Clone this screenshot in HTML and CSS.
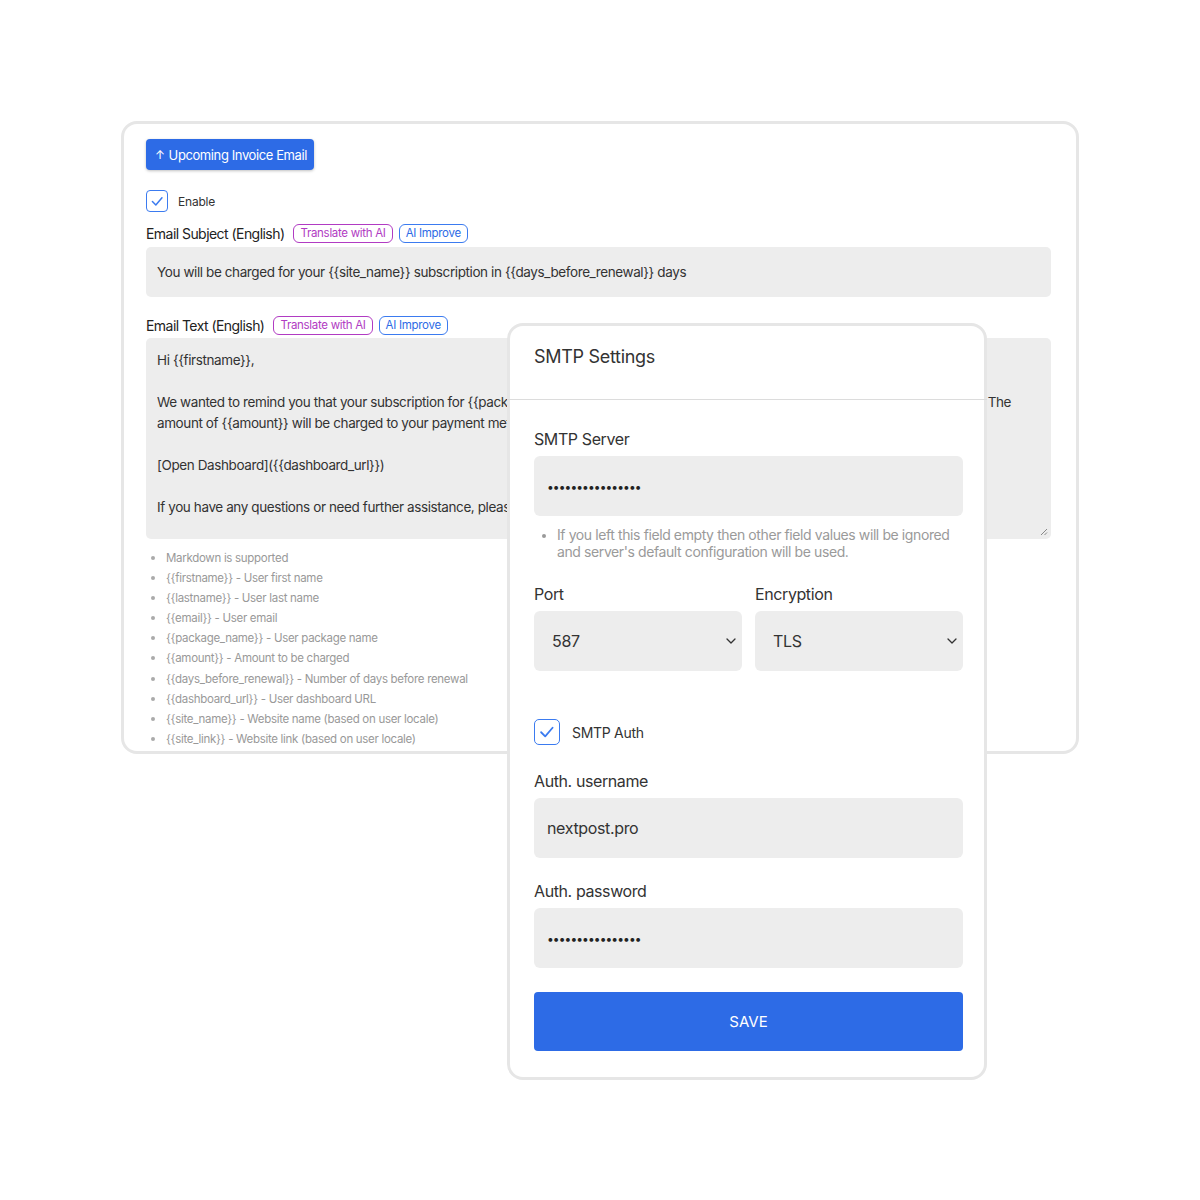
FILE: index.html
```html
<!DOCTYPE html>
<html lang="en">
<head>
<meta charset="utf-8">
<title>Upcoming Invoice Email</title>
<link rel="stylesheet" href="styles.css">
</head>
<body>
<div class="stage">
  <section class="card">
    <button class="tab-btn"><span class="arrow">↑</span> Upcoming Invoice Email</button>

    <label class="check-row">
      <span class="checkbox small"><svg viewBox="0 0 24 24"><polyline points="5,12.5 10,17.5 19,7"/></svg></span>
      <span class="check-label">Enable</span>
    </label>

    <div class="field-head">
      <span class="field-title">Email Subject (English)</span>
      <span class="badge purple">Translate with AI</span>
      <span class="badge blue">AI Improve</span>
    </div>
    <div class="subject">You will be charged for your {{site_name}} subscription in {{days_before_renewal}} days</div>

    <div class="field-head second">
      <span class="field-title">Email Text (English)</span>
      <span class="badge purple">Translate with AI</span>
      <span class="badge blue">AI Improve</span>
    </div>
    <div class="body-text">
      <div class="ln">Hi {{firstname}},</div>
      <div class="ln blank"></div>
      <div class="ln split"><span class="cut">We wanted to remind you that your subscription for {{package_name}} on {{site_name}} will be renewed in {{days_before_renewal}} days.</span><span class="tail">The</span></div>
      <div class="ln">amount of {{amount}} will be charged to your payment method on file.</div>
      <div class="ln blank"></div>
      <div class="ln">[Open Dashboard]({{dashboard_url}})</div>
      <div class="ln blank"></div>
      <div class="ln">If you have any questions or need further assistance, please contact our support team.</div>
      <svg class="grip" viewBox="0 0 8 8"><line x1="1" y1="7" x2="7" y2="1"/><line x1="4.5" y1="7" x2="7" y2="4.5"/></svg>
    </div>

    <ul class="vars">
      <li>Markdown is supported</li>
      <li>{{firstname}} - User first name</li>
      <li>{{lastname}} - User last name</li>
      <li>{{email}} - User email</li>
      <li>{{package_name}} - User package name</li>
      <li>{{amount}} - Amount to be charged</li>
      <li>{{days_before_renewal}} - Number of days before renewal</li>
      <li>{{dashboard_url}} - User dashboard URL</li>
      <li>{{site_name}} - Website name (based on user locale)</li>
      <li>{{site_link}} - Website link (based on user locale)</li>
    </ul>
  </section>

  <section class="smtp">
    <div class="smtp-head">SMTP Settings</div>
    <div class="smtp-body">
      <div class="group">
        <div class="label">SMTP Server</div>
        <div class="input dots">••••••••••••••••</div>
      </div>
      <ul class="hint">
        <li>If you left this field empty then other field values will be ignored and server's default configuration will be used.</li>
      </ul>

      <div class="two-col">
        <div class="col">
          <div class="label">Port</div>
          <div class="input select"><span>587</span><svg viewBox="0 0 12 12"><polyline points="2,4 6,8 10,4"/></svg></div>
        </div>
        <div class="col">
          <div class="label">Encryption</div>
          <div class="input select"><span>TLS</span><svg viewBox="0 0 12 12"><polyline points="2,4 6,8 10,4"/></svg></div>
        </div>
      </div>

      <label class="check-row auth">
        <span class="checkbox"><svg viewBox="0 0 24 24"><polyline points="5,12.5 10,17.5 19,7"/></svg></span>
        <span class="check-label big">SMTP Auth</span>
      </label>

      <div class="group">
        <div class="label">Auth. username</div>
        <div class="input">nextpost.pro</div>
      </div>
      <div class="group">
        <div class="label">Auth. password</div>
        <div class="input dots">••••••••••••••••</div>
      </div>

      <button class="save">SAVE</button>
    </div>
  </section>
</div>
</body>
</html>
```

FILE: styles.css
```css
* { box-sizing: border-box; }
html, body { margin: 0; background: #ffffff; }
body {
  font-family: Inter, "Liberation Sans", sans-serif;
  color: #333333;
  width: 1200px;
  height: 1200px;
}
.stage {
  position: relative;
  margin: 121px 0 0 121px;
  width: 958px;
}
.card {
  border: 3px solid #e6e6e6;
  border-radius: 16px;
  padding: 15px 25px 2px 22px;
  display: flex;
  flex-direction: column;
  align-items: flex-start;
  background: #fff;
}
.tab-btn {
  font-family: inherit;
  background: #2d6be6;
  color: #fff;
  border: 0;
  border-radius: 4px;
  height: 31px;
  padding: 0 7px 0 9px;
  font-size: 13px;
  letter-spacing: -0.4px;
  box-shadow: 0 1px 3px rgba(0,0,0,0.25);
  display: flex;
  align-items: center;
  gap: 4px;
}
.tab-btn .arrow { font-size: 12px; }
.check-row {
  display: flex;
  align-items: center;
  gap: 10px;
  margin-top: 20px;
}
.checkbox {
  width: 26px;
  height: 26px;
  border: 1.5px solid #3b7bf0;
  border-radius: 5px;
  display: flex;
  align-items: center;
  justify-content: center;
  background: #fff;
}
.checkbox.small { width: 22px; height: 22px; border-radius: 4px; }
.checkbox svg { width: 82%; height: 82%; fill: none; stroke: #3b7bf0; stroke-width: 2.2; stroke-linecap: round; stroke-linejoin: round; }
.check-label { font-size: 12px; color: #333; letter-spacing: -0.2px; }
.check-label.big { font-size: 14px; letter-spacing: -0.3px; }
.field-head {
  display: flex;
  align-items: center;
  margin-top: 11px;
  height: 20px;
}
.field-head.second { margin-top: 18px; }
.field-title { font-size: 14px; color: #222; margin-right: 9px; letter-spacing: -0.55px; }
.badge {
  font-size: 11.5px;
  letter-spacing: -0.3px;
  border: 1px solid;
  border-radius: 6px;
  height: 19px;
  padding: 0 6px;
  display: flex;
  align-items: center;
  margin-right: 6px;
}
.badge.purple { color: #b13bc3; border-color: #b13bc3; }
.badge.blue { color: #2d6be6; border-color: #3b7bf0; }
.subject {
  margin-top: 4px;
  width: 905px;
  height: 50px;
  background: #ededed;
  border-radius: 5px;
  font-size: 13.5px;
  padding: 0 11px 1px;
  display: flex;
  align-items: center;
  color: #333;
  letter-spacing: -0.4px;
}
.body-text {
  position: relative;
  margin-top: 3px;
  width: 905px;
  height: 201px;
  background: #ededed;
  border-radius: 5px;
  font-size: 13.5px;
  line-height: 21px;
  color: #333;
  padding: 12px 11px 11px;
  letter-spacing: -0.4px;
  overflow: hidden;
}
.ln { height: 21px; white-space: nowrap; overflow: hidden; }
.ln.split { display: flex; padding-right: 29px; }
.ln.split .cut { flex: 1; overflow: hidden; }
.ln.split .tail { margin-left: 4px; }
.grip {
  position: absolute;
  right: 3px;
  bottom: 3px;
  width: 8px;
  height: 8px;
  stroke: #888;
  stroke-width: 1;
}
.vars {
  margin: 9px 0 0;
  padding: 0 0 0 20px;
  font-size: 11.5px;
  color: #999;
  line-height: 20.1px;
  letter-spacing: -0.3px;
}
.vars li::marker { font-size: 12px; color: #aaa; }

/* SMTP overlay panel */
.smtp {
  position: absolute;
  left: 386px;
  top: 202px;
  width: 480px;
  border: 3px solid #e6e6e6;
  border-radius: 16px;
  background: #fff;
}
.smtp-head {
  height: 74px;
  padding: 19px 24px 0 27px;
  font-size: 18px;
  line-height: 24px;
  color: #333;
  letter-spacing: -0.3px;
  border-bottom: 1px solid #dcdcdc;
  margin: 0 -3px;
}
.smtp-body {
  padding: 29px 21px 26px 24px;
  display: flex;
  flex-direction: column;
}
.group, .col { display: flex; flex-direction: column; }
.label { font-size: 16px; line-height: 20px; color: #333; margin-bottom: 7px; letter-spacing: -0.4px; }
.input {
  height: 60px;
  background: #ededed;
  border-radius: 6px;
  padding: 0 13px;
  display: flex;
  align-items: center;
  font-size: 16px;
  color: #333;
  letter-spacing: -0.35px;
}
.dots { font-size: 12px; letter-spacing: -0.9px; color: #222; }
.hint {
  margin: 10px 0 0;
  padding: 0 0 0 23px;
  font-size: 14px;
  line-height: 17px;
  color: #9a9a9a;
  letter-spacing: -0.4px;
}
.hint li::marker { font-size: 12px; }
.two-col {
  display: grid;
  grid-template-columns: 1fr 1fr;
  gap: 13px;
  margin-top: 24px;
}
.select { justify-content: space-between; padding: 0 5px 0 18px; }
.select svg { width: 12px; height: 12px; fill: none; stroke: #333; stroke-width: 1.3; stroke-linecap: round; stroke-linejoin: round; }
.check-row.auth { margin-top: 48px; gap: 12px; }
.check-row.auth + .group { margin-top: 26px; }
.group + .group { margin-top: 23px; }
.save {
  margin-top: 24px;
  height: 59px;
  border: 0;
  border-radius: 4px;
  background: #2d6be6;
  color: #fff;
  font-family: inherit;
  font-size: 15px;
  letter-spacing: 0px;
}
```
